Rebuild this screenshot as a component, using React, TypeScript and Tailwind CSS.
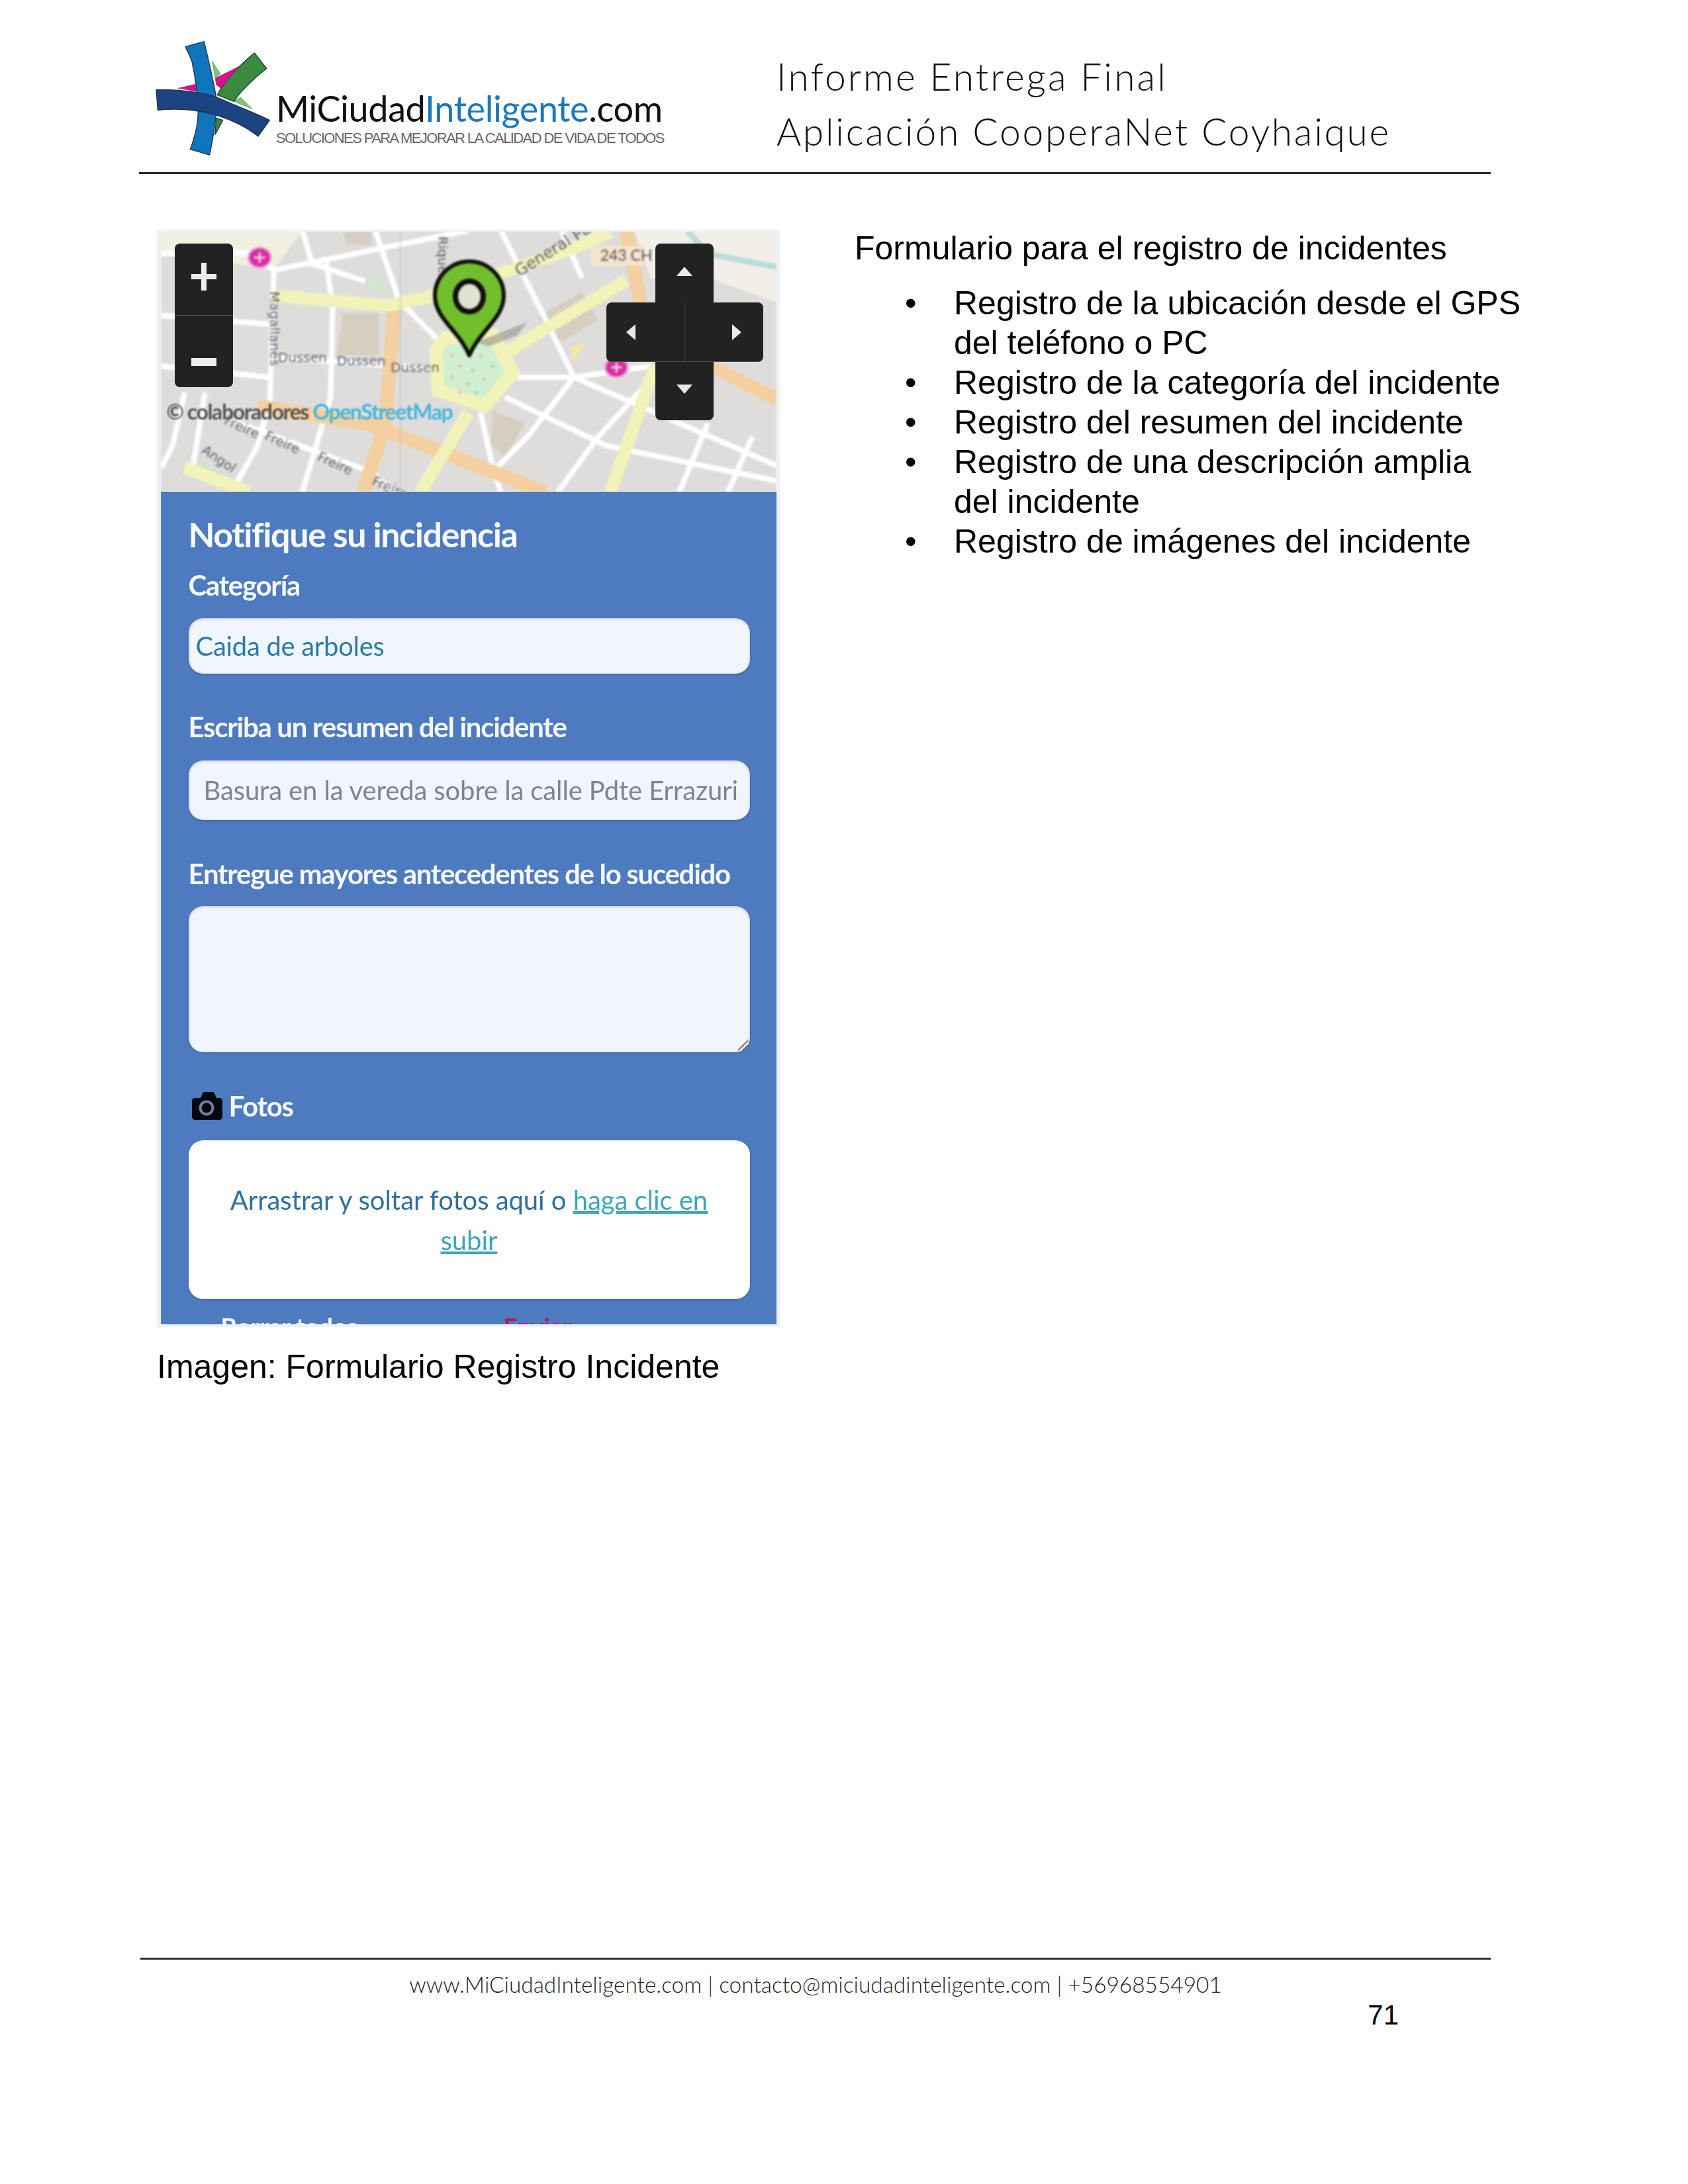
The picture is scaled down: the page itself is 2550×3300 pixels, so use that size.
import React from "react";

const X = (x: number) => x / 1.633 - 13;
const Y = (y: number) => y / 3 - 9;
const pts = (p: number[][]) => p.map(([x, y]) => `${X(x)},${Y(y)}`).join(" ");

const white: number[][][] = [
  [[22, 130], [240, 125], [300, 205], [780, 25]],
  [[370, 25], [395, 175], [525, 255]],
  [[550, 25], [610, 345], [710, 530]],
  [[860, 25], [960, 390], [1040, 690], [1540, 1090]],
  [[1010, 25], [1060, 240]],
  [[300, 210], [290, 800], [260, 1000], [195, 1212]],
  [[430, 170], [445, 380], [440, 780], [370, 1212]],
  [[22, 410], [290, 450]],
  [[22, 640], [290, 690]],
  [[300, 600], [690, 650]],
  [[900, 690], [1040, 690], [1230, 640]],
  [[1040, 690], [930, 950], [850, 1100]],
  [[870, 780], [1120, 1000], [1540, 1160]],
  [[810, 850], [840, 1100], [860, 1212]],
  [[1370, 900], [1300, 1212]],
  [[1480, 960], [1420, 1212]],
  [[160, 860], [540, 1120], [600, 1212]],
  [[80, 760], [50, 1000], [22, 1100]],
  [[130, 760], [100, 1100]],
  [[1230, 700], [1100, 960]],
  [[1100, 960], [1000, 1212]],
];

const yellow: number[][][] = [
  [[300, 320], [580, 365], [700, 320], [1040, 105], [1130, 30]],
  [[870, 580], [1170, 250]],
  [[780, 850], [660, 1212]],
  [[1240, 640], [1130, 1212]],
  [[80, 1100], [240, 1212]],
];

const orange: number[][][] = [
  [[598, 350], [575, 900], [520, 1212]],
  [[1170, 30], [1205, 360]],
  [[1380, 640], [1540, 790]],
  [[260, 820], [540, 905], [970, 1212]],
];

const dots: number[][] = [
  [740, 590], [770, 560], [810, 590], [840, 640], [760, 640], [790, 660], [740, 690], [780, 720], [820, 700], [800, 760], [760, 760],
];

function Poi({ cx, cy }: { cx: number; cy: number }) {
  return (
    <g>
      <ellipse cx={cx} cy={cy} rx="17" ry="15" fill="#d92ea3" stroke="#f0a5d8" strokeWidth="3" />
      <path d={`M${cx - 8},${cy} H${cx + 8} M${cx},${cy - 8} V${cy + 8}`} stroke="#f7d2ea" strokeWidth="3" />
    </g>
  );
}

function MapDrawing() {
  return (
    <svg width="930" height="394" viewBox="0 0 930 394" className="block blur-[1.4px]">
      <rect width="930" height="394" fill="#dfdddc" />
      <polygon points={pts([[22, 27], [370, 27], [300, 200], [22, 130]])} fill="#f1efe0" />
      <polygon points={pts([[1190, 27], [1540, 27], [1540, 350], [1390, 250], [1230, 240]])} fill="#f2efe9" />
      <polyline points={pts([[1320, 27], [1370, 130], [1540, 190]])} fill="none" stroke="#b9dcdc" strokeWidth="9" />
      <polygon points={pts([[470, 400], [560, 400], [560, 590], [455, 590]])} fill="#d5cfc2" />
      <polygon points={pts([[950, 420], [1060, 300], [1100, 430], [1010, 530]])} fill="#d5cfc2" />
      <polygon points={pts([[840, 840], [920, 900], [870, 1050], [835, 1000]])} fill="#d5cfc2" />
      <polygon points={pts([[470, 30], [540, 30], [540, 90], [480, 90]])} fill="#d5cfc2" />
      <polygon points={pts([[520, 260], [560, 240], [585, 320]])} fill="#cdebc9" />
      <polygon points={pts([[110, 1060], [190, 1150], [130, 1160]])} fill="#c9e8c0" />
      <polygon points={pts([[1030, 560], [1070, 530], [1040, 610]])} fill="#f3e9a5" />
      {white.map((p, i) => (
        <polyline key={i} points={pts(p)} fill="none" stroke="#ffffff" strokeWidth="8" />
      ))}
      {orange.map((p, i) => (
        <polyline key={i} points={pts(p)} fill="none" stroke="#f4cf9f" strokeWidth="21" />
      ))}
      {yellow.map((p, i) => (
        <polyline key={i} points={pts(p)} fill="none" stroke="#f1f3b9" strokeWidth="19" />
      ))}
      <polygon
        points={pts([[722, 510], [840, 500], [890, 670], [820, 820], [705, 750], [700, 570]])}
        fill="#d0efd0"
        stroke="#f1f3b9"
        strokeWidth="20"
      />
      {dots.map(([x, y], i) => (
        <circle key={i} cx={X(x)} cy={Y(y)} r="2.5" fill={i % 2 ? "#9fd6b0" : "#e6b8c4"} />
      ))}
      <line x1={X(612)} y1="0" x2={X(612)} y2="394" stroke="#b9b9b5" strokeWidth="1" />
      <polygon points={pts([[800, 530], [925, 440], [900, 500], [830, 550]])} fill="#8a8a86" opacity="0.55" />
      <Poi cx={X(265)} cy={Y(148)} />
      <Poi cx={X(1145)} cy={Y(645)} />
      <g fill="#5d5d68" fontFamily="'DejaVu Sans', sans-serif" fontSize="20">
        <text x={X(310)} y={Y(620)}>Dussen</text>
        <text x={X(455)} y={Y(635)}>Dussen</text>
        <text x={X(588)} y={Y(665)}>Dussen</text>
        <text transform={`translate(${X(905)} ${Y(235)}) rotate(-32)`} fontSize="24">General Pal</text>
        <text transform={`translate(${X(290)} ${Y(300)}) rotate(90)`}>Magallanes</text>
        <text transform={`translate(${X(705)} ${Y(50)}) rotate(90)`}>Riquelme</text>
        <text transform={`translate(${X(175)} ${Y(900)}) rotate(24)`}>Freire</text>
        <text transform={`translate(${X(275)} ${Y(970)}) rotate(24)`}>Freire</text>
        <text transform={`translate(${X(405)} ${Y(1065)}) rotate(24)`}>Freire</text>
        <text transform={`translate(${X(540)} ${Y(1175)}) rotate(24)`}>Freire</text>
        <text transform={`translate(${X(120)} ${Y(1030)}) rotate(34)`}>Angol</text>
      </g>
      <rect x={X(1082)} y={Y(95)} width="80" height="30" fill="#f4e4cd" />
      <text x={X(1105)} y={Y(163)} fill="#59544c" fontFamily="'Lato', sans-serif" fontSize="23">243 CH</text>
      <path
        d="M466,188 C450,150 414,132 414,98 A52,52 0 1 1 518,98 C518,132 482,150 466,188 Z"
        fill="#72bf2d"
        stroke="#0d0d0a"
        strokeWidth="6"
        strokeLinejoin="round"
      />
      <ellipse cx="466" cy="99" rx="21" ry="23" fill="#e1e2d2" stroke="#0d0d0a" strokeWidth="8" />
    </svg>
  );
}

function Tri({ d }: { d: "up" | "down" | "left" | "right" }) {
  const p = {
    up: "1,15 25,15 13,1",
    down: "1,1 25,1 13,15",
    left: "15,1 15,25 1,13",
    right: "1,1 1,25 15,13",
  }[d];
  const horizontal = d === "left" || d === "right";
  return (
    <svg width={horizontal ? 16 : 26} height={horizontal ? 26 : 16} viewBox={horizontal ? "0 0 16 26" : "0 0 26 16"}>
      <polygon points={p} fill="#e9e9e9" />
    </svg>
  );
}

function Logo() {
  return (
    <div className="flex items-start w-[963px] pt-[50px] pl-[15px]">
      <svg width="200" height="200" viewBox="0 0 600 600" className="shrink-0">
        <g stroke="#27343c" strokeWidth="4" strokeLinejoin="round">
          <path d="M478,90 L533,160 C470,210 410,270 385,310 L310,280 C340,220 410,145 478,90Z" fill="#3b8b3e" />
          <path d="M305,385 L335,395 L300,460Z" fill="#3b8b3e" />
          <path d="M130,250 L210,232 L215,265Z M300,205 L410,150 L325,250 L305,235Z" fill="#d6128c" strokeWidth="1" />
          <path d="M285,125 L325,185 L300,205Z M415,290 L470,345 L385,310Z" fill="#7cc576" strokeWidth="1" />
          <path
            d="M165,62 L250,38 C262,90 285,180 303,280 C310,350 300,430 275,552 L187,527 C215,450 225,400 222,350 C220,280 210,200 195,130 C185,100 175,85 165,62Z"
            fill="#0f75bd"
          />
          <path
            d="M33,257 C120,255 250,265 330,300 C420,340 490,365 547,395 L495,468 C420,410 350,385 280,365 C200,345 120,340 40,350 Z"
            fill="#1c4382"
          />
        </g>
      </svg>
      <div className="ml-[-8px] pt-[82px] flex flex-col">
        <div className="font-['Lato',sans-serif] text-[54px] leading-[64px] tracking-[-0.4px] text-[#111] whitespace-nowrap">
          MiCiudad<span className="text-[#1c78bd]">Inteligente</span>.com
        </div>
        <div className="font-['Liberation_Sans',sans-serif] text-[22px] leading-[26px] tracking-[-1.6px] text-[#666] whitespace-nowrap">
          SOLUCIONES PARA MEJORAR LA CALIDAD DE VIDA DE TODOS
        </div>
      </div>
    </div>
  );
}

function ImagePanel() {
  const label = "shrink-0 font-['Lato',sans-serif] font-bold text-[42px] leading-[46px] tracking-[-1.3px] text-[#f4f8fd] whitespace-nowrap";
  const field = "shrink-0 rounded-[22px] bg-[#f1f6fc] shadow-[inset_0_1px_4px_rgba(0,0,0,0.22),0_1px_3px_rgba(20,40,80,0.35)]";
  return (
    <div className="w-[941px] h-[1658px] border-[3px] border-[#eef1f4] bg-[#eef1f4] overflow-hidden">
      <div className="relative h-[394px] w-[930px] mx-auto mt-[-1px] overflow-hidden">
        <MapDrawing />
        <div className="absolute left-[21px] top-[19px] w-[88px] h-[217px] rounded-[8px] bg-[#222222] flex flex-col">
          <div className="h-[109px] flex items-center justify-center border-b border-[#555] pb-[8px]">
            <svg width="38" height="42" viewBox="0 0 38 42">
              <path d="M15,0 H23 V17 H38 V25 H23 V42 H15 V25 H0 V17 H15 Z" fill="#ececec" />
            </svg>
          </div>
          <div className="flex-1 flex items-center justify-center pt-[32px]">
            <div className="w-[38px] h-[12px] bg-[#ececec]" />
          </div>
        </div>
        <div className="absolute right-[20px] top-[19px] w-[237px] flex flex-col items-center">
          <div className="w-[88px] h-[89px] rounded-t-[8px] bg-[#222222] flex items-center justify-center pb-[6px]">
            <Tri d="up" />
          </div>
          <div className="w-[237px] h-[90px] rounded-[8px] bg-[#222222] flex items-center border-b border-[#555]">
            <div className="w-[118px] h-full flex items-center justify-center pr-[42px] border-r border-[#444]">
              <Tri d="left" />
            </div>
            <div className="flex-1 h-full flex items-center justify-center pl-[40px]">
              <Tri d="right" />
            </div>
          </div>
          <div className="w-[88px] h-[88px] rounded-b-[8px] bg-[#222222] flex items-center justify-center pb-[6px]">
            <Tri d="down" />
          </div>
        </div>
        <div className="absolute left-[9px] top-[253px] font-['Lato',sans-serif] font-bold text-[32px] leading-[40px] tracking-[-1.4px] text-[#555] whitespace-nowrap blur-[0.8px]">
          © colaboradores <span className="text-[#45b6dc]">OpenStreetMap</span>
        </div>
      </div>
      <div className="w-[930px] h-[1258px] mx-auto bg-[#4e7bbf] overflow-hidden pl-[42px] pr-[40px] pt-[34px] flex flex-col blur-[0.7px]">
        <div className="shrink-0 font-['Lato',sans-serif] font-bold text-[52px] leading-[60px] tracking-[-1.4px] text-[#f6f9fd] whitespace-nowrap">
          Notifique su incidencia
        </div>
        <div className={`${label} mt-[24px]`}>Categoría</div>
        <div className={`${field} mt-[27px] h-[84px] flex items-center pl-[11px]`}>
          <span className="font-['Lato',sans-serif] text-[40px] tracking-[-0.3px] text-[#2a7ca8]">Caida de arboles</span>
        </div>
        <div className={`${label} mt-[57px]`}>Escriba un resumen del incidente</div>
        <div className={`${field} mt-[28px] h-[90px] flex items-center pl-[23px]`}>
          <span className="font-['Lato',sans-serif] text-[40px] tracking-[-0.12px] text-[#7f858e] whitespace-nowrap">
            Basura en la vereda sobre la calle Pdte Errazuri
          </span>
        </div>
        <div className={`${label} mt-[58px]`}>Entregue mayores antecedentes de lo sucedido</div>
        <div className={`${field} relative mt-[26px] h-[221px]`}>
          <svg width="18" height="18" viewBox="0 0 18 18" className="absolute right-[2px] bottom-[2px]">
            <path d="M2,17 L17,2 M9,17 L17,9" stroke="#777" strokeWidth="2" />
          </svg>
        </div>
        <div className="shrink-0 mt-[58px] flex items-center h-[46px] pl-[4px]">
          <svg width="48" height="42" viewBox="0 0 48 42" className="shrink-0">
            <path
              d="M6,9 H14 L17,2 Q18,0 20,0 H32 Q34,0 35,2 L38,9 H42 Q47,9 47,14 V37 Q47,42 42,42 H6 Q1,42 1,37 V14 Q1,9 6,9 Z"
              fill="#04070f"
            />
            <circle cx="23" cy="24" r="9.5" fill="#04070f" stroke="#6f7fa5" strokeWidth="4" />
          </svg>
          <span className="ml-[9px] font-['Lato',sans-serif] font-bold text-[42px] leading-[46px] tracking-[-1.3px] text-[#f4f8fd]">Fotos</span>
        </div>
        <div className="mt-[29px] h-[240px] shrink-0 rounded-[22px] bg-white shadow-[0_1px_3px_rgba(20,40,80,0.35)] pt-[60px] text-center font-['Lato',sans-serif] text-[40px] leading-[61px] tracking-[-0.05px] text-[#2f6f9e] px-[50px]">
          Arrastrar y soltar fotos aquí o <span className="text-[#3aa7b8] underline">haga clic en subir</span>
        </div>
        <div className="mt-[18px] shrink-0 flex font-['Lato',sans-serif] font-bold text-[37px] leading-[46px] text-[#f4f8fd] pl-[49px] whitespace-nowrap">
          <span>Borrar todos</span>
          <span className="ml-[220px] text-[#b01c5c]">Enviar</span>
        </div>
      </div>
    </div>
  );
}

const items: string[] = [
  "Registro de la ubicación desde el GPS del teléfono o PC",
  "Registro de la categoría del incidente",
  "Registro del resumen del incidente",
  "Registro de una descripción amplia del incidente",
  "Registro de imágenes del incidente",
];

export default function App() {
  return (
    <div className="w-[2550px] h-[3300px] bg-white flex flex-col font-['Liberation_Sans',Arial,sans-serif] text-black">
      <header className="ml-[210px] w-[2042px] h-[263px] border-b-[3px] border-[#2a2a2a] flex shrink-0">
        <Logo />
        <div className="pt-[74px] font-['Lato',sans-serif] font-light text-[#111] text-[57px] leading-[83px] tracking-[2.7px] whitespace-nowrap">
          <div className="tracking-[3.1px]">Informe Entrega Final</div>
          <div>Aplicación CooperaNet Coyhaique</div>
        </div>
      </header>

      <main className="flex-1 flex pl-[237px] pt-[84px]">
        <div className="w-[941px] shrink-0">
          <ImagePanel />
          <p className="mt-[30px] text-[50px] leading-[60px] whitespace-nowrap">Imagen: Formulario Registro Incidente</p>
        </div>
        <div className="ml-[113px] w-[1010px] mt-[-2px]">
          <p className="text-[50px] leading-[60px]">Formulario para el registro de incidentes</p>
          <ul className="mt-[23px] pl-[76px]">
            {items.map((t) => (
              <li key={t} className="flex text-[50px] leading-[60px]">
                <span className="w-[74px] shrink-0">•</span>
                <span className="w-[860px]">{t}</span>
              </li>
            ))}
          </ul>
        </div>
      </main>

      <footer className="ml-[212px] w-[2040px] h-[342px] border-t-[3px] border-[#2a2a2a] shrink-0 flex flex-col">
        <p className="mt-[17px] text-center font-['Lato',sans-serif] font-light text-[33.4px] leading-[40px] text-[#222] whitespace-nowrap">
          www.MiCiudadInteligente.com | contacto@miciudadinteligente.com | +56968554901
        </p>
        <p className="mt-[2px] text-right pr-[139px] text-[42px] leading-[50px]">71</p>
      </footer>
    </div>
  );
}
